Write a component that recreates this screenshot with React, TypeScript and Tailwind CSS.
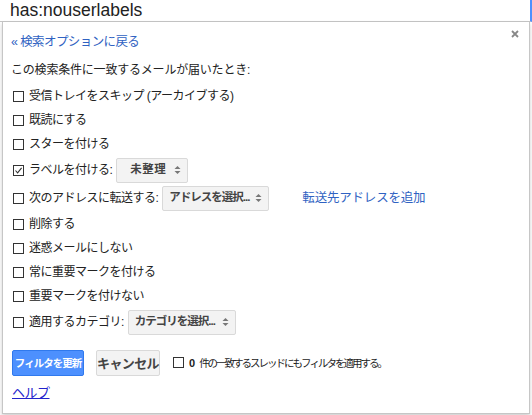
import React from 'react';

type CheckProps = { checked?: boolean };

function Box({ checked }: CheckProps) {
  return (
    <span className="inline-flex w-[11px] h-[11px] border border-[#333] bg-white items-center justify-center shrink-0">
      {checked && (
        <svg width="9" height="9" viewBox="0 0 9 9">
          <path d="M1.5 4.5 L3.6 6.8 L7.6 1.8" fill="none" stroke="#333" strokeWidth="1.1" />
        </svg>
      )}
    </span>
  );
}

function Select({ label, className }: { label: string; className: string }) {
  return (
    <div
      className={`${className} h-[25px] flex items-center justify-between pr-[6px] bg-[#f3f3f3] border border-[#d9d9d9] rounded-[2px] text-[11.5px] font-bold text-[#444] whitespace-nowrap`}
    >
      <span>{label}</span>
      <svg width="7" height="10" viewBox="0 0 7 10">
        <path d="M0.5 4 L3.5 1 L6.5 4 Z" fill="#777" />
        <path d="M0.5 6 L3.5 9 L6.5 6 Z" fill="#777" />
      </svg>
    </div>
  );
}

function Row({
  text,
  checked,
  tall,
  children,
}: {
  text: string;
  checked?: boolean;
  tall?: boolean;
  children?: React.ReactNode;
}) {
  return (
    <div className={`${tall ? 'h-[28px]' : 'h-[24px]'} flex items-center pl-[10px] whitespace-nowrap`}>
      <Box checked={checked} />
      <span className="ml-[5px] tracking-[-0.5px]">{text}</span>
      {children}
    </div>
  );
}

export default function App() {
  return (
    <div className="w-[532px] h-[415px] bg-white relative overflow-hidden font-['Liberation_Sans','Noto_Sans_CJK_JP',sans-serif] text-[#222] leading-none">
      <div className="h-[22px] border-b border-[#c6c6c6] border-r-2 border-r-[#4d90fe] flex items-center pl-[10px] text-[17.5px] text-[#222]">
        has:nouserlabels
      </div>
      <div className="relative ml-[2px] w-[528px] h-[392px] border-l border-r border-b border-[#c6c6c6] shadow-[0_2px_4px_rgba(0,0,0,0.2)] text-[12px]">
        <svg className="absolute right-[10px] top-[8px]" width="8" height="8" viewBox="0 0 8 8">
          <path d="M1 1 L7 7 M7 1 L1 7" stroke="#888" strokeWidth="1.8" />
        </svg>
        <div className="pt-[10px] pl-[8px]">
          <div className="h-[20px] flex items-center text-[#2f62c2] text-[12.5px] tracking-[-0.6px]">« 検索オプションに戻る</div>
        </div>
        <div className="mt-[8px] h-[20px] flex items-center pl-[8px] tracking-[-0.2px]">
          この検索条件に一致するメールが届いたとき:
        </div>
        <div className="mt-[4px]">
          <Row text="受信トレイをスキップ (アーカイブする)" />
          <Row text="既読にする" />
          <Row text="スターを付ける" />
          <Row text="ラベルを付ける:" checked tall>
            <div className="ml-[4px]">
              <Select label="未整理" className="w-[72px] pl-[13px] tracking-[0.5px]" />
            </div>
          </Row>
          <Row text="次のアドレスに転送する:" tall>
            <div className="ml-[4px]">
              <Select label="アドレスを選択..." className="w-[107px] pl-[6px] tracking-[-1px]" />
            </div>
            <span className="ml-[33px] text-[#2f62c2] text-[12.5px] tracking-[-0.2px]">転送先アドレスを追加</span>
          </Row>
          <Row text="削除する" />
          <Row text="迷惑メールにしない" />
          <Row text="常に重要マークを付ける" />
          <Row text="重要マークを付けない" />
          <Row text="適用するカテゴリ:" tall>
            <div className="ml-[4px]">
              <Select label="カテゴリを選択..." className="w-[108px] pl-[6px] tracking-[-1px]" />
            </div>
          </Row>
        </div>
        <div className="mt-[14px] h-[26px] flex items-center pl-[9px] whitespace-nowrap">
          <button
            type="button"
            className="h-[26px] w-[72px] bg-[#4d90fe] border border-[#3079ed] rounded-[2px] text-white text-[10.5px] font-bold tracking-[-1px]"
          >
            フィルタを更新
          </button>
          <button
            type="button"
            className="ml-[12px] h-[26px] w-[64px] bg-[#f3f3f3] border border-[#d9d9d9] rounded-[2px] text-[#444] text-[13px] font-bold tracking-[-0.6px]"
          >
            キャンセル
          </button>
          <span className="ml-[13px]">
            <Box />
          </span>
          <span className="ml-[5px] text-[11px] font-bold">0</span>
          <span className="ml-[4px] text-[10.5px] tracking-[-2px]">件の一致するスレッドにもフィルタを適用する。</span>
        </div>
        <div className="mt-[8px] h-[16px] flex items-center pl-[9px]">
          <span className="text-[13px] text-[#2222cc] underline tracking-[-0.5px]">ヘルプ</span>
        </div>
      </div>
    </div>
  );
}
